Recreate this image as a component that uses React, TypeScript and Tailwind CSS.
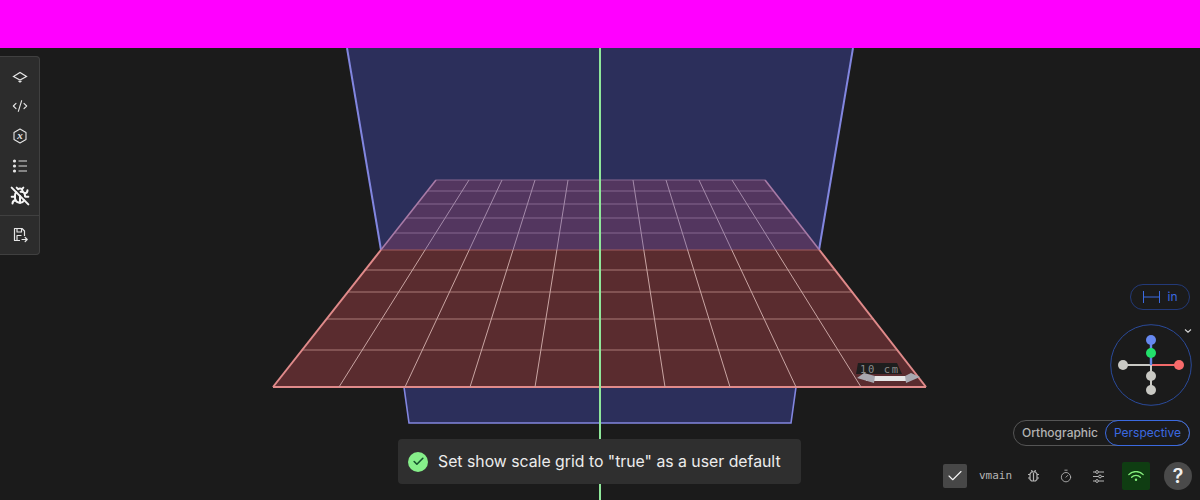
import { BugOff, Check, CodeXml, Timer } from 'lucide-react';

const horizontals = [
  { y: 180, left: 436, right: 765 },
  { y: 191, left: 427.5, right: 773.5 },
  { y: 204, left: 417, right: 783 },
  { y: 218, left: 406.5, right: 794 },
  { y: 233, left: 394, right: 806 },
  { y: 250, left: 381, right: 819 },
  { y: 270, left: 364.5, right: 835.5 },
  { y: 292, left: 347, right: 853 },
  { y: 319, left: 326, right: 874 },
  { y: 350, left: 302, right: 898 },
  { y: 387, left: 273, right: 926 },
];

const backXs = [436, 469, 502, 535, 568, 600, 633, 666, 699, 732, 765];
const frontXs = [273, 339, 405, 470, 535, 600, 665, 730, 796, 861, 926];

function Scene() {
  return (
    <svg className="block h-[452px] w-[1200px]" viewBox="0 48 1200 452">
      {/* back plane */}
      <polygon points="347,48 853,48 819,250 381,250" fill="#2c2f5b" stroke="none" />
      <line x1="347" y1="48" x2="381" y2="250" stroke="#8286e0" strokeWidth="2" />
      <line x1="853" y1="48" x2="819" y2="250" stroke="#8286e0" strokeWidth="2" />
      <polygon points="404,387 796,387 791,423 409,423" fill="#2c2f5b" stroke="#8286e0" strokeWidth="1.6" />

      {/* floor */}
      <polygon points="436,180 765,180 819,250 381,250" fill="#53365f" />
      <polygon points="381,250 819,250 926,387 273,387" fill="#5a2c2f" />

      {horizontals.map((h, i) => (
        <line
          key={h.y}
          x1={h.left}
          y1={h.y}
          x2={h.right}
          y2={h.y}
          stroke={i < 5 ? '#86668f' : i === 5 ? '#a05a5c' : i === 10 ? '#e08a8a' : '#a97a78'}
          strokeWidth={i === 10 ? 2 : 1.2}
        />
      ))}
      {backXs.map((x, i) => {
        const isEdge = i === 0 || i === 10;
        const midX = x + (frontXs[i] - x) * (70 / 207);
        return (
          <g key={x}>
            <line x1={x} y1={180} x2={midX} y2={250} stroke={isEdge ? '#a87aa6' : '#a48aaa'} strokeWidth={isEdge ? 1.6 : 1} />
            <line x1={midX} y1={250} x2={frontXs[i]} y2={387} stroke={isEdge ? '#e08a8a' : '#c9a5a3'} strokeWidth={isEdge ? 2 : 1} />
          </g>
        );
      })}

      {/* scale marker */}
      <polygon points="858,363 897,363 902,374 856,374" fill="#1e1e1e" />
      <text x="860" y="373" fontFamily="'DejaVu Sans Mono', monospace" fontSize="10.5" fill="#8a8a8a" letterSpacing="1.6">10 cm</text>
      <polygon points="866,376 910,376 910,381 866,381" fill="#e6e6e6" />
      <polygon points="857,378 864,373 875,376 874,383" fill="#a8a8b0" />
      <polygon points="920,377 911,373 905,376 906,383" fill="#a8a8b0" />

      {/* vertical axis */}
      <line x1="600" y1="48" x2="600" y2="500" stroke="#8fe79a" strokeWidth="2" />
    </svg>
  );
}

function PlaneIcon() {
  return (
    <svg width="16" height="16" viewBox="0 0 16 16" fill="none" stroke="#e5e5e5" strokeWidth="1.2" strokeLinejoin="miter">
      <path d="M1.5 7.5 8 3.5l6.5 4-6.5 3.5Z" />
      <path d="M6.5 12 8 13l1.5-1" />
    </svg>
  );
}

function VariableIcon() {
  return (
    <svg width="16" height="16" viewBox="0 0 16 16" fill="none" stroke="#e5e5e5" strokeWidth="1.1" strokeLinejoin="round">
      <path d="M8 1 14 4.4v7.2L8 15 2 11.6V4.4Z" />
      <text x="8" y="11" textAnchor="middle" fontFamily="'Liberation Serif', serif" fontStyle="italic" fontWeight="700" fontSize="11" fill="#e5e5e5" stroke="none">x</text>
    </svg>
  );
}

function ListIcon() {
  return (
    <svg width="16" height="14" viewBox="0 0 16 14" fill="none">
      <circle cx="2.5" cy="2" r="1.6" fill="#e5e5e5" />
      <circle cx="2.5" cy="7" r="1.6" fill="#e5e5e5" />
      <circle cx="2.5" cy="12" r="1.6" fill="#e5e5e5" />
      <path d="M6.5 2H15M6.5 7H15M6.5 12H15" stroke="#a3a3a3" strokeWidth="1.5" />
    </svg>
  );
}

function ExportIcon() {
  return (
    <svg width="16" height="16" viewBox="0 0 16 16" fill="none" stroke="#e5e5e5" strokeWidth="1.2" strokeLinejoin="round">
      <path d="M8 13.5H2.5v-12h7.5l2.5 2.5V9" />
      <path d="M5 1.5v3.5h4.5v-3.5" />
      <path d="M5 13V8.5h4.5" />
      <path d="M10 12.5h5M13.2 10.5l2 2-2 2" strokeLinecap="round" />
    </svg>
  );
}

function BeetleIcon() {
  return (
    <svg width="11" height="12" viewBox="0 0 11 12" fill="none" stroke="#b5b5b5" strokeWidth="1.2">
      <path d="M3.5 2h4L9 4v5.5L7.5 11h-4L2 9.5V4Z" />
      <path d="M5.5 3v8M3.5 0l1 2M7.5 0l-1 2M0 4.5h2M9 4.5h2M0 8h2M9 8h2" />
    </svg>
  );
}

function SlidersIcon() {
  return (
    <svg width="11" height="13" viewBox="0 0 11 13" fill="none" stroke="#b5b5b5" strokeWidth="1">
      <path d="M0 2h2.5M5.5 2H11M0 6.5h5.5M8.5 6.5H11M0 11h2.5M5.5 11H11" />
      <circle cx="4" cy="2" r="1.4" />
      <circle cx="7" cy="6.5" r="1.4" />
      <circle cx="4" cy="11" r="1.4" />
    </svg>
  );
}

function WifiSignalIcon() {
  return (
    <svg width="16" height="10" viewBox="0 0 16 10" fill="none" stroke="#86ef7d" strokeWidth="1.3" strokeLinecap="round">
      <path d="M.8 3.6a10 10 0 0 1 14.4 0" />
      <path d="M3.6 6.2a6 6 0 0 1 8.8 0" />
      <circle cx="8" cy="8.8" r="1.2" fill="#86ef7d" stroke="none" />
    </svg>
  );
}

function Toolbar() {
  return (
    <div className="absolute left-0 top-[8px] flex w-[40px] flex-col rounded-r-[4px] border border-l-0 border-[#404040] bg-[#2c2c2c]">
      <div className="flex flex-col pb-[3px] pt-[5px]">
        <div className="flex h-[30px] items-center justify-center"><PlaneIcon /></div>
        <div className="flex h-[30px] items-center justify-center pb-[2px]"><CodeXml size={16} strokeWidth={1.7} color="#e5e5e5" /></div>
        <div className="flex h-[30px] items-center justify-center pb-[2px]"><VariableIcon /></div>
        <div className="flex h-[30px] items-center justify-center pb-[2px]"><ListIcon /></div>
        <div className="flex h-[30px] items-center justify-center pb-[2px]"><BugOff size={20} strokeWidth={2.4} color="#f5f5f5" /></div>
      </div>
      <div className="flex h-[39px] items-center justify-center border-t border-[#404040]"><ExportIcon /></div>
    </div>
  );
}

function Gizmo() {
  return (
    <svg width="82" height="82" viewBox="0 0 82 82" fill="none">
      <circle cx="41" cy="41" r="40.3" stroke="#2a4a9a" strokeWidth="1" />
      <line x1="13" y1="41" x2="41" y2="41" stroke="#c9c9c4" strokeWidth="2" />
      <line x1="41" y1="41" x2="69" y2="41" stroke="#f26a6a" strokeWidth="2" />
      <line x1="41" y1="41" x2="41" y2="66" stroke="#c9c9c4" strokeWidth="2" />
      <line x1="41" y1="16" x2="41" y2="41" stroke="#6688e8" strokeWidth="2.4" />
      <circle cx="13" cy="41" r="5" fill="#c9c9c4" />
      <circle cx="69" cy="41" r="5" fill="#f96b6b" />
      <circle cx="41" cy="16" r="5" fill="#6688f0" />
      <circle cx="41" cy="29" r="5" fill="#22e06b" />
      <circle cx="41" cy="52" r="5" fill="#c9c9c4" />
      <circle cx="41" cy="66" r="5" fill="#c9c9c4" />
    </svg>
  );
}

function RightControls() {
  return (
    <div className="absolute bottom-[10px] right-[10px] flex flex-col items-end">
      <div className="flex h-[26px] w-[60px] items-center justify-center gap-[8px] rounded-full border border-[#233a78] text-[12px] text-[#3b6ae0]">
        <svg width="17" height="12" viewBox="0 0 17 12" fill="none" stroke="#3b6ae0" strokeWidth="1">
          <path d="M.5 0v12M16.5 0v12M.5 6h16" />
        </svg>
        <span>in</span>
      </div>

      <div className="relative mr-[-2px] mt-[14px]">
        <Gizmo />
        <svg className="absolute right-[0px] top-[4px]" width="8" height="6" viewBox="0 0 8 6" fill="none" stroke="#d4d4d4" strokeWidth="1.1">
          <path d="M1 1.5 4 4.2 7 1.5" />
        </svg>
      </div>

      <div className="relative mt-[14px] flex h-[26px] w-[177px] items-center rounded-full border border-[#555] text-[12px]">
        <span className="pl-[8px] font-medium text-[#b3b3b3]">Orthographic</span>
        <span className="absolute right-[-1px] top-[-1px] flex h-[26px] w-[85px] items-center justify-center rounded-full border border-[#3b6ae0] text-[#3b6ae0]">Perspective</span>
      </div>

      <div className="mr-[-10px] mt-[16px] flex h-[28px] items-center pr-[8px]">
        <div className="flex h-[24px] w-[24px] items-center justify-center rounded-[2px] bg-[#474747]">
          <Check size={18} strokeWidth={1.5} color="#f5f5f5" />
        </div>
        <span className="ml-[12px] w-[33px] font-['DejaVu_Sans_Mono',monospace] text-[11px] text-[#b5b5b5]">vmain</span>
        <span className="ml-[16px]"><BeetleIcon /></span>
        <Timer className="ml-[20px]" size={14} strokeWidth={1.5} color="#b5b5b5" />
        <span className="ml-[20px]"><SlidersIcon /></span>
        <div className="ml-[18px] flex h-[28px] w-[28px] items-center justify-center rounded-[2px] bg-[#0f3d12]">
          <WifiSignalIcon />
        </div>
        <div className="ml-[14px] flex h-[28px] w-[28px] items-center justify-center rounded-full bg-[#4a4a4a] text-[20px] font-semibold text-[#f0f0f0]">?</div>
      </div>
    </div>
  );
}

function Toast() {
  return (
    <div className="absolute bottom-[16px] left-[398px] flex h-[45px] w-[403px] items-center gap-[10px] rounded-[4px] bg-[#2f2f2f] pl-[10px] text-[15.8px] text-[#ececec]">
      <div className="flex h-[20px] w-[20px] items-center justify-center rounded-full bg-[#86ef8a]">
        <Check size={13} strokeWidth={3} color="#14532d" />
      </div>
      <span>Set show scale grid to "true" as a user default</span>
    </div>
  );
}

export default function App() {
  return (
    <div className="flex h-[500px] w-[1200px] flex-col overflow-hidden bg-[#1b1b1b] font-['Inter',sans-serif]">
      <div className="h-[48px] shrink-0 bg-[#ff00ff]" />
      <div className="relative flex-1">
        <Scene />
        <Toolbar />
        <RightControls />
        <Toast />
      </div>
    </div>
  );
}
